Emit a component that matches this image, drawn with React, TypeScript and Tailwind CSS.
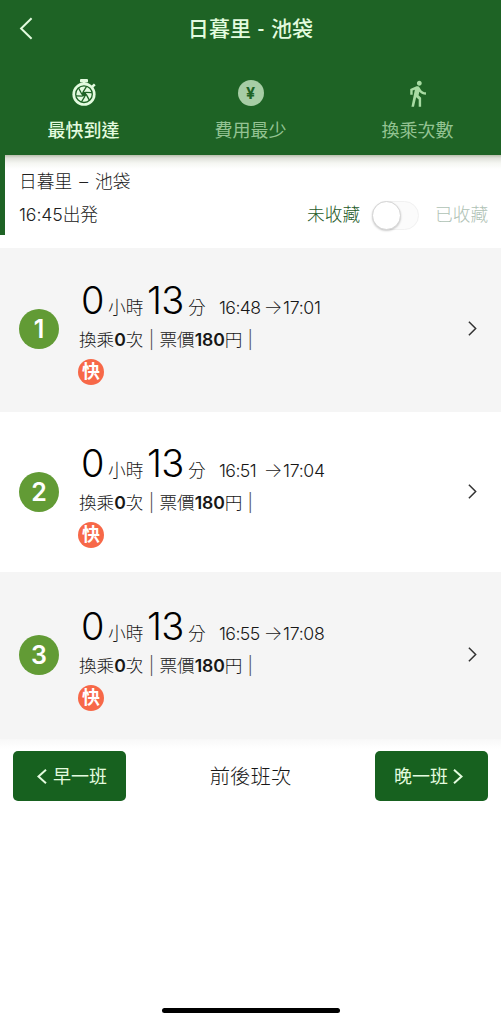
import { MdDirectionsWalk } from "react-icons/md";

type Trip = { id: number; from: string; to: string; row: string };

const trips: Trip[] = [
  { id: 1, from: "16:48", to: "17:01", row: "h-[164px] pt-[33px] bg-[#f5f5f5]" },
  { id: 2, from: "16:51", to: "17:04", row: "h-[160px] pt-[32px] bg-white" },
  { id: 3, from: "16:55", to: "17:08", row: "h-[167px] pt-[35px] bg-[#f5f5f5]" },
];

function Chevron({ left = false, className }: { left?: boolean; className: string }) {
  return (
    <svg viewBox="0 0 10 18" className={className} fill="none" stroke="currentColor" preserveAspectRatio="none">
      <path d={left ? "M9 1 1.5 9 9 17" : "M1 1 8.5 9 1 17"} vectorEffect="non-scaling-stroke" />
    </svg>
  );
}

function Stopwatch() {
  return (
    <svg viewBox="0 0 26 30" className="h-[30px] w-[26px]" fill="none">
      <rect x="9" y="1" width="8" height="3.4" rx="1" fill="#e3fbdf" />
      <path d="M13 3v4M21 9l2.8-2.6" stroke="#e3fbdf" strokeWidth="2.6" />
      <circle cx="13" cy="16.2" r="11.6" fill="#e3fbdf" />
      <g stroke="#1e6325" strokeWidth="1.3">
        <circle cx="13" cy="16.2" r="8.3" />
        {[0, 60, 120, 180, 240, 300].map((a) => (
          <path key={a} d="M12 14.2 15.6 8.4" transform={`rotate(${a} 13 16.2)`} />
        ))}
      </g>
      <circle cx="13" cy="16.2" r="2.4" fill="#1e6325" />
    </svg>
  );
}

function TripRow({ trip }: { trip: Trip }) {
  return (
    <div className={`flex items-start ${trip.row}`}>
      <div className="mt-[28px] ml-[19px] flex size-10 shrink-0 items-center justify-center rounded-full bg-[#629b35] pt-px text-[25px] font-semibold text-white">
        {trip.id}
      </div>
      <div className="ml-[19px] w-[380px] shrink-0 font-light text-[#171717]">
        <div className="flex h-[40px] items-baseline whitespace-nowrap leading-[38px]">
          <span className="w-[30px] pl-[3px] text-[38px] text-black">0</span>
          <span className="w-[39px] text-[17.7px]">小時</span>
          <span className="w-[41px] text-[38px] tracking-[-0.7px] text-black">13</span>
          <span className="w-[31px] text-[17.7px]">分</span>
          <span className="w-[44px] text-[17.7px] tracking-[-0.6px]">{trip.from}</span>
          <span className="w-[20px] text-center text-[20px] font-extralight">→</span>
          <span className="text-[17.7px] tracking-[-0.3px]">{trip.to}</span>
        </div>
        <div className="flex h-[34px] items-center pt-[4px] pl-px whitespace-nowrap text-[17.6px]">
          <span>換乘</span>
          <b className="font-semibold">0</b>
          <span>次</span>
          <span className="w-[16px] text-center text-[#555]">|</span>
          <span>票價</span>
          <b className="font-semibold tracking-[-0.1px]">180</b>
          <span>円</span>
          <span className="w-[16px] text-center text-[#555]">|</span>
        </div>
        <div className="mt-[4px] flex size-[26px] items-center justify-center rounded-full bg-[#f76848] text-[18px] leading-none font-bold text-white">
          快
        </div>
      </div>
      <Chevron className="mt-[40px] ml-[10px] h-[15px] w-[9px] stroke-[1.5] text-[#333]" />
    </div>
  );
}

export default function App() {
  return (
    <div className="flex h-[1024px] w-[501px] flex-col overflow-hidden bg-white font-['Inter','Noto_Sans_CJK_TC',sans-serif] antialiased">
      <header className="relative z-10 h-[155px] shrink-0 bg-[#1e6325] text-[#e3fbdf]">
        <div className="grid h-[57px] grid-cols-[40px_1fr_40px] items-center">
          <Chevron left className="ml-[19px] h-[23px] w-[14px] stroke-2" />
          <h1 className="text-center text-[21px] font-medium tracking-[0.1px] whitespace-nowrap">日暮里<span className="mx-[5px] inline-block origin-center scale-x-75">-</span>池袋</h1>
        </div>
        <nav className="grid grid-cols-3 pt-[20px] text-[18px]">
          <div className="flex flex-col items-center font-medium">
            <div className="flex h-[32px] items-center"><Stopwatch /></div>
            <span className="mt-[8px] leading-[28px]">最快到達</span>
          </div>
          <div className="flex flex-col items-center text-[#94c393]">
            <div className="flex h-[32px] items-center">
              <span className="flex size-[26px] items-center justify-center rounded-full bg-[#a7cda5] text-[16px] font-bold text-[#1e6325]">¥</span>
            </div>
            <span className="mt-[8px] leading-[28px]">費用最少</span>
          </div>
          <div className="flex flex-col items-center text-[#94c393]">
            <div className="flex h-[32px] items-center text-[#a8dba3]"><MdDirectionsWalk size={29} /></div>
            <span className="mt-[8px] leading-[28px]">換乘次數</span>
          </div>
        </nav>
      </header>

      <section className="h-[93px] shrink-0">
        <div className="h-[80px] border-l-[5px] border-[#1e6325] bg-[linear-gradient(to_bottom,#b9beac_0px,#dfe1da_3px,#f5f6f2_8px,#fff_14px)] pt-[13px] pl-[14px] text-[17.7px] font-light text-[#202020]">
          <div className="flex leading-[28px]">
            <span>日暮里</span><span className="w-[23px] text-center">–</span><span>池袋</span>
          </div>
          <div className="mt-[4px] flex h-[30px] items-center whitespace-nowrap">
            <span className="w-[288px] tracking-[-0.1px]">16:45出発</span>
            <span className="w-[65px] text-[#1e5a28]">未收藏</span>
            <span className="flex h-[29px] w-[47px] items-center rounded-full border border-[#f1f1f1] bg-[#fbfbfb]">
              <span className="-ml-px size-[29px] rounded-full border border-[#d5d5d5] bg-white shadow-[0_1px_2px_#0003]" />
            </span>
            <span className="ml-[16px] text-[#afc2b5]">已收藏</span>
          </div>
        </div>
      </section>

      <main>
        {trips.map((trip) => <TripRow key={trip.id} trip={trip} />)}
      </main>

      <div className="flex items-center justify-between bg-[linear-gradient(to_bottom,#f8f8f8,#fff_10px)] px-[13px] pt-[12px] text-[18px]">
        <button className="flex h-[50px] w-[113px] items-center rounded-[5px] bg-[#17611f] pl-[24px] text-[#e3fbdf]">
          <Chevron left className="mr-[6px] h-[15px] w-[10px] stroke-2" />早一班
        </button>
        <span className="pt-[2px] text-[20.4px] font-light text-[#171717]">前後班次</span>
        <button className="flex h-[50px] w-[113px] items-center rounded-[5px] bg-[#17611f] pl-[19px] text-[#e3fbdf]">
          晚一班<Chevron className="ml-[5px] h-[15px] w-[10px] stroke-2" />
        </button>
      </div>

      <div className="mx-auto mt-auto mb-[11px] h-[5px] w-[178px] rounded-full bg-black" />
    </div>
  );
}
